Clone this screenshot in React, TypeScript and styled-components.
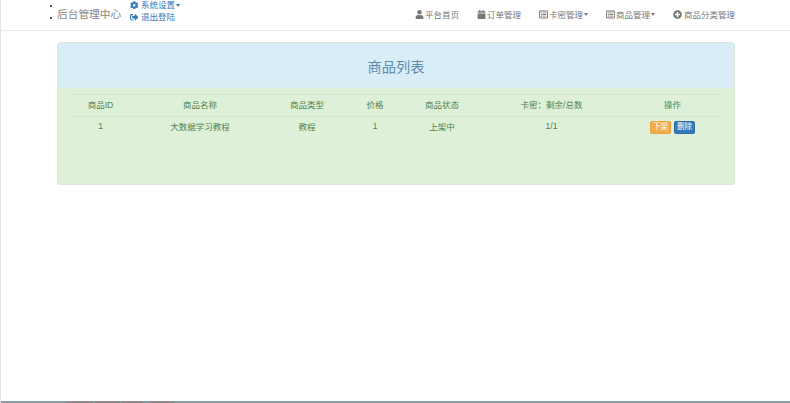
import React from "react";
import styled, { createGlobalStyle } from "styled-components";
import { FaUser, FaCalendar, FaRegListAlt, FaPlusCircle, FaCog, FaSignOutAlt } from "react-icons/fa";

const Global = createGlobalStyle`
  html, body { margin: 0; padding: 0; background: #fff; }
  body { font-family: "Liberation Sans", "Noto Sans CJK SC", sans-serif; overflow: hidden; }
`;

const Page = styled.div`
  height: 403px;
  display: flex;
  flex-direction: column;
  border-left: 1px solid #e4e4e4;
  box-sizing: border-box;
`;
const Nav = styled.header`
  height: 31px;
  flex: none;
  box-sizing: border-box;
  border-bottom: 1px solid #e9e9e9;
  display: flex;
  padding: 0 55px 0 49px;
`;
const Dots = styled.div`
  display: flex;
  flex-direction: column;
  gap: 10px;
  padding-top: 5px;
  width: 7px;
`;
const Dot = styled.span`
  width: 2px;
  height: 2px;
  border-radius: 50%;
  background: #222;
`;
const Brand = styled.div`
  font-size: 10.7px;
  line-height: 29px;
  color: #858585;
  width: 73px;
  white-space: nowrap;
`;
const UserMenu = styled.div`
  display: flex;
  flex-direction: column;
  font-size: 8.5px;
  line-height: 12px;
  color: #337ab7;
  margin-top: -1px;
`;
const UserItem = styled.div`
  display: flex;
  align-items: center;
  height: 12px;
  svg { width: 8.5px; height: 8.5px; margin-right: 2.5px; }
`;
const Caret = styled.i`
  display: inline-block;
  margin-left: 1px;
  border-top: 3px solid currentColor;
  border-left: 2.5px solid transparent;
  border-right: 2.5px solid transparent;
`;
const RightMenu = styled.nav`
  margin-left: auto;
  display: flex;
  gap: 18px;
  color: #777;
  font-size: 8.5px;
`;
const MenuItem = styled.div`
  display: flex;
  align-items: center;
  height: 28px;
  white-space: nowrap;
  svg { width: 9px; height: 9px; margin-right: 1px; }
  &:last-child svg { margin-right: 2px; }
`;
const Main = styled.main`
  flex: 1;
  padding: 11px 55px 0 56px;
`;
const Panel = styled.section`
  height: 143px;
  box-sizing: border-box;
  background: #dff0d8;
  border: 1px solid #dde5da;
  border-radius: 3px;
  overflow: hidden;
`;
const Heading = styled.h2`
  margin: 0;
  height: 45px;
  background: #d9edf7;
  border-bottom: 1px solid #d8ecea;
  box-sizing: border-box;
  color: #5c8bab;
  font-size: 14.2px;
  font-weight: 400;
  line-height: 48px;
  text-align: center;
`;
const TableWrap = styled.div`
  padding: 6px 12px 0 12px;
`;
const Row = styled.div<{ $h: number }>`
  display: grid;
  grid-template-columns: 61px 138px 76px 60px 74px 145px 97px;
  border-top: 1px solid #d5e6cf;
  color: #4f8350;
  font-size: 8.5px;
  text-align: center;
  box-sizing: border-box;
  height: ${(p) => p.$h}px;
  padding-bottom: 4px;
  align-items: center;
`;
const Actions = styled.div`
  display: flex;
  justify-content: center;
  align-self: start;
  gap: 2.3px;
  margin-top: 4px;
`;
const Btn = styled.span<{ $bg: string; $bd: string }>`
  width: 21.5px;
  height: 13px;
  box-sizing: border-box;
  border-radius: 2px;
  background: ${(p) => p.$bg};
  border: 1px solid ${(p) => p.$bd};
  color: #fff;
  font-size: 7.5px;
  line-height: 10px;
  text-align: center;
`;
const Strip = styled.div`
  height: 2px;
  flex: none;
  background: #8a9ba3;
  display: flex;
  padding-left: 66px;
  gap: 2px;
`;
const StripTab = styled.span<{ $w: number; $m?: number }>`
  width: ${(p) => p.$w}px;
  margin-left: ${(p) => p.$m ?? 0}px;
  background: #8f8a8c;
`;

const head = ["商品ID", "商品名称", "商品类型", "价格", "商品状态", "卡密：剩余/总数", "操作"];
const row = ["1", "大数据学习教程", "教程", "1", "上架中", "1/1"];

export default function App() {
  return (
    <Page>
      <Global />
      <Nav>
        <Dots><Dot /><Dot /></Dots>
        <Brand>后台管理中心</Brand>
        <UserMenu>
          <UserItem><FaCog />系统设置<Caret /></UserItem>
          <UserItem><FaSignOutAlt />退出登陆</UserItem>
        </UserMenu>
        <RightMenu>
          <MenuItem><FaUser />平台首页</MenuItem>
          <MenuItem><FaCalendar />订单管理</MenuItem>
          <MenuItem><FaRegListAlt />卡密管理<Caret /></MenuItem>
          <MenuItem><FaRegListAlt />商品管理<Caret /></MenuItem>
          <MenuItem><FaPlusCircle />商品分类管理</MenuItem>
        </RightMenu>
      </Nav>
      <Main>
        <Panel>
          <Heading>商品列表</Heading>
          <TableWrap>
            <Row $h={22}>{head.map((h) => <div key={h}>{h}</div>)}</Row>
            <Row $h={22}>
              {row.map((c, i) => <div key={i}>{c}</div>)}
              <Actions>
                <Btn $bg="#f0ad4e" $bd="#eea236">下架</Btn>
                <Btn $bg="#337ab7" $bd="#2e6da4">删除</Btn>
              </Actions>
            </Row>
          </TableWrap>
        </Panel>
      </Main>
      <Strip>
        <StripTab $w={26} /><StripTab $w={25} /><StripTab $w={21} /><StripTab $w={25} $m={4} />
      </Strip>
    </Page>
  );
}
